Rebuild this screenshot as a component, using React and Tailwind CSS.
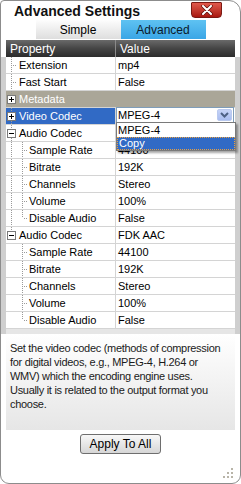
import React from "react";

const FONT = { fontFamily: '"Liberation Sans", Arial, sans-serif' };

function Gutter({ kind, outer, first, last, expanded }) {
  const dot = { stroke: "#9a9a9a", strokeWidth: 1, strokeDasharray: "1 1", fill: "none" };
  return (
    <svg width="22" height="16" className="shrink-0" style={{ display: "block" }}>
      {kind === "leaf" && (
        <g style={dot}>
          <line x1="4.5" y1="0" x2="4.5" y2="16" />
          <line x1="6" y1="8.5" x2="10" y2="8.5" />
        </g>
      )}
      {kind === "group" && (
        <g>
          <g style={dot}>
            {!first && <line x1="4.5" y1="0" x2="4.5" y2="4" />}
            {!last && <line x1="4.5" y1="13" x2="4.5" y2="16" />}
          </g>
          <rect x="0.5" y="4.5" width="8" height="8" fill="#fff" stroke="#7a7a7a" />
          <line x1="2" y1="8.5" x2="7" y2="8.5" stroke="#000" />
          {!expanded && <line x1="4.5" y1="6" x2="4.5" y2="11" stroke="#000" />}
        </g>
      )}
      {kind === "sub" && (
        <g style={dot}>
          {outer && <line x1="4.5" y1="0" x2="4.5" y2="16" />}
          <line x1="15.5" y1="0" x2="15.5" y2={last ? 8 : 16} />
          <line x1="17" y1="8.5" x2="20" y2="8.5" />
        </g>
      )}
    </svg>
  );
}

const rows = [
  { kind: "leaf", label: "Extension", value: "mp4" },
  { kind: "leaf", label: "Fast Start", value: "False" },
  { kind: "group", label: "Metadata", category: true },
  { kind: "group", label: "Video Codec", selected: true, combo: true },
  { kind: "group", label: "Audio Codec", expanded: true, value: "" },
  { kind: "sub", label: "Sample Rate", value: "44100", outer: true },
  { kind: "sub", label: "Bitrate", value: "192K", outer: true },
  { kind: "sub", label: "Channels", value: "Stereo", outer: true },
  { kind: "sub", label: "Volume", value: "100%", outer: true },
  { kind: "sub", label: "Disable Audio", value: "False", outer: true, last: true },
  { kind: "group", label: "Audio Codec", expanded: true, value: "FDK AAC", last: true },
  { kind: "sub", label: "Sample Rate", value: "44100" },
  { kind: "sub", label: "Bitrate", value: "192K" },
  { kind: "sub", label: "Channels", value: "Stereo" },
  { kind: "sub", label: "Volume", value: "100%" },
  { kind: "sub", label: "Disable Audio", value: "False", last: true },
];

function Row({ r }) {
  if (r.category) {
    return (
      <div className="flex h-[17px] items-center bg-[#aaa698] border-b border-[#d4d4d4] pl-[1px] text-white">
        <Gutter kind="group" />
        <span className="-ml-[10px] leading-[16px]">{r.label}</span>
      </div>
    );
  }
  const pad = r.kind === "sub" ? "ml-[0px]" : "-ml-[10px]";
  return (
    <div className="flex h-[17px] border-b border-[#d4d4d4]">
      <div
        className={
          "flex w-[109px] shrink-0 items-center pl-[1px] " +
          (r.selected ? "bg-[#316ac5] text-white" : "")
        }
      >
        <Gutter kind={r.kind} outer={r.outer} last={r.last} expanded={r.expanded} />
        <span className={"leading-[16px] whitespace-nowrap " + pad}>{r.label}</span>
      </div>
      <div className="w-[1px] shrink-0 bg-[#d4d4d4]" />
      <div className="relative flex flex-1 items-center pl-[2px]">
        {r.combo ? (
          <div className="absolute left-0 right-[1px] -top-[1px] h-[16px] flex items-center border border-[#7f9db9] bg-white pl-[1px]">
            <span className="flex-1 leading-[14px]">MPEG-4</span>
            <div className="mr-[1px] flex h-[12px] w-[15px] items-center justify-center rounded-[2px] bg-gradient-to-b from-[#c6d3f7] to-[#a9bdf0] border border-[#b9c9ef]">
              <svg width="9" height="6" viewBox="0 0 9 6">
                <path d="M1 1 L4.5 4.5 L8 1" stroke="#4d6185" strokeWidth="2" fill="none" />
              </svg>
            </div>
          </div>
        ) : (
          <span className="leading-[16px]">{r.value}</span>
        )}
      </div>
    </div>
  );
}

export default function App() {
  return (
    <div
      className="relative w-[241px] h-[484px] overflow-hidden rounded-tl-[4px] rounded-tr-[12px] rounded-b-[9px] border border-[#8c8c8c] bg-white text-[11px] text-black"
      style={FONT}
    >
      <div className="flex h-[19px] items-start">
        <div className="pl-[13px] pt-[2px] text-[14px] font-bold leading-[16px] text-[#111]">
          Advanced Settings
        </div>
        <div className="ml-auto mr-[18px] mt-[1px] flex h-[16px] w-[31px] items-center justify-center rounded-b-[4px] rounded-t-[1px] border border-[#7a1a14] bg-gradient-to-b from-[#e0584b] to-[#a8150e]">
          <svg width="12" height="10" viewBox="0 0 12 10">
            <path d="M2 1 L10 9 M10 1 L2 9" stroke="#5a0e0a" strokeWidth="3.4" strokeLinecap="round" />
            <path d="M2 1 L10 9 M10 1 L2 9" stroke="#fff" strokeWidth="2" strokeLinecap="round" />
          </svg>
        </div>
      </div>

      <div className="flex justify-center">
        <div className="flex h-[19px] w-[85px] items-center justify-center bg-gradient-to-b from-[#fdfdfd] to-[#dedede] text-[12px]">
          Simple
        </div>
        <div className="flex h-[19px] w-[85px] items-center justify-center bg-gradient-to-b from-[#5ec2f2] to-[#3aa6e6] text-[12px] text-[#0c1a2a]">
          Advanced
        </div>
      </div>

      <div className="mt-[1px] px-[5px]">
        <div className="flex h-[17px] bg-gradient-to-b from-[#6a6a6a] via-[#454545] to-[#2c2c2c] text-[12px] text-white">
          <div className="flex w-[109px] items-center pl-[4px]">Property</div>
          <div className="w-[1px] bg-[#8a8a8a]" />
          <div className="flex flex-1 items-center pl-[4px]">Value</div>
        </div>
      </div>

      <div className="bg-[#cfcfcf] px-[5px]">
        <div className="relative bg-white">
          {rows.map((r, i) => (
            <Row key={i} r={r} />
          ))}
          <div className="absolute left-[110px] top-[65px] w-[120px] border border-[#7a7a7a] bg-white shadow-[2px_2px_2px_rgba(0,0,0,0.35)]">
            <div className="h-[14px] pl-[1px] leading-[14px]">MPEG-4</div>
            <div className="h-[13px] border border-dotted border-[#e8a040] bg-[#316ac5] pl-[1px] leading-[11px] text-white">
              Copy
            </div>
          </div>
        </div>
        <div className="h-[5px] bg-[#e6e6e6]" />
      </div>

      <div className="px-[5px]">
        <div className="h-[96px] bg-gradient-to-b from-white to-[#e6e6e6] px-[4px] pt-[7px] text-[11px] leading-[14px] tracking-[-0.3px] whitespace-nowrap text-[#1a1a1a]">
          Set the video codec (methods of compression
          <br />
          for digital videos, e.g., MPEG-4, H.264 or
          <br />
          WMV) which the encoding engine uses.
          <br />
          Usually it is related to the output format you
          <br />
          choose.
        </div>
      </div>

      <div className="mt-[4px] flex justify-center">
        <button className="h-[20px] w-[81px] rounded-[3px] border border-[#6e6e6e] bg-gradient-to-b from-[#f8f8f8] to-[#d6d6d6] text-[12px] leading-[18px] text-black">
          Apply To All
        </button>
      </div>

      <svg className="absolute right-[6px] bottom-[4px]" width="12" height="12" viewBox="0 0 12 12">
        <g fill="#b8b4a8">
          <rect x="9" y="1" width="2" height="2" />
          <rect x="5" y="5" width="2" height="2" />
          <rect x="9" y="5" width="2" height="2" />
          <rect x="1" y="9" width="2" height="2" />
          <rect x="5" y="9" width="2" height="2" />
          <rect x="9" y="9" width="2" height="2" />
        </g>
      </svg>
    </div>
  );
}
